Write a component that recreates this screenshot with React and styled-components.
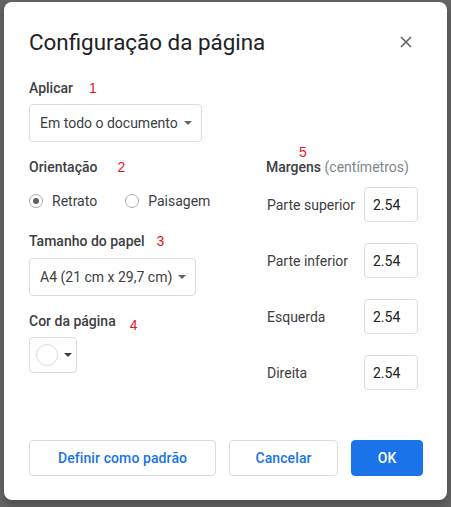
import styled, { createGlobalStyle } from "styled-components";

const GlobalStyle = createGlobalStyle`
  html, body {
    margin: 0;
    padding: 0;
    background: #646464;
  }
  body {
    font-family: Roboto, "Noto Sans", Arial, sans-serif;
    -webkit-font-smoothing: antialiased;
  }
  * {
    box-sizing: border-box;
  }
`;

const Backdrop = styled.div`
  width: 451px;
  height: 507px;
  padding: 2px 4px 6px 4px;
  display: flex;
  align-items: flex-start;
`;

const Dialog = styled.section`
  width: 443px;
  background: #fff;
  border-radius: 8px;
  padding: 24px 24px 24px 25px;
  display: flex;
  flex-direction: column;
  box-shadow: 0 4px 8px rgba(0, 0, 0, 0.25);
`;

const Header = styled.header`
  display: flex;
  align-items: center;
  justify-content: space-between;
  height: 32px;
`;

const Title = styled.h1`
  margin: 0;
  font-size: 22.4px;
  line-height: 32px;
  font-weight: 400;
  color: #202124;
`;

const CloseButton = styled.button`
  border: none;
  background: none;
  padding: 0;
  width: 24px;
  height: 24px;
  margin-right: 5px;
  display: flex;
  align-items: center;
  justify-content: center;
  cursor: pointer;
`;

const Label = styled.div`
  position: relative;
  font-size: 14px;
  line-height: 20px;
  font-weight: 500;
  color: #3c4043;
  margin-top: ${(p) => p.$top}px;
  margin-bottom: ${(p) => p.$bottom ?? 6}px;
`;

const Hint = styled.span`
  font-weight: 400;
  color: #80868b;
`;

const Marker = styled.span`
  font-family: "Liberation Sans", Arial, sans-serif;
  font-weight: 400;
  font-size: 14px;
  color: #e8141c;
  margin-left: ${(p) => p.$gap}px;
  position: relative;
  top: ${(p) => p.$drop || 0}px;
`;

const FloatingMarker = styled(Marker)`
  position: absolute;
  left: 33px;
  top: -15px;
  margin: 0;
`;

const Select = styled.button`
  height: 38px;
  padding: 0 9px 0 10px;
  border: 1px solid #dadce0;
  border-radius: 4px;
  background: #fff;
  display: inline-flex;
  align-items: center;
  gap: 6px;
  font-family: inherit;
  font-size: 14px;
  color: #3c4043;
  align-self: flex-start;
  cursor: pointer;
`;

const Caret = styled.span`
  width: 0;
  height: 0;
  border-left: 4px solid transparent;
  border-right: 4px solid transparent;
  border-top: 4px solid ${(p) => p.$color || "#5f6368"};
`;

const Columns = styled.div`
  display: grid;
  grid-template-columns: 237px 1fr;
`;

const Column = styled.div`
  display: flex;
  flex-direction: column;
`;

const RadioGroup = styled.div`
  display: flex;
  align-items: center;
  height: 20px;
  margin-top: 14px;
`;

const RadioOption = styled.label`
  display: flex;
  align-items: center;
  gap: 9px;
  font-size: 14px;
  color: #3c4043;
  margin-right: 28px;
`;

const RadioCircle = styled.span`
  width: 14px;
  height: 14px;
  border-radius: 50%;
  border: 1px solid #a6aaaf;
  display: flex;
  align-items: center;
  justify-content: center;

  &::after {
    content: "";
    width: 6px;
    height: 6px;
    border-radius: 50%;
    background: ${(p) => (p.$checked ? "#5f6368" : "transparent")};
  }
`;

const ColorButton = styled.button`
  width: 48px;
  height: 36px;
  border: 1px solid #dadce0;
  border-radius: 4px;
  background: #fff;
  display: flex;
  align-items: center;
  padding: 0 0 0 6px;
  gap: 6px;
  cursor: pointer;
`;

const Swatch = styled.span`
  width: 22px;
  height: 22px;
  border-radius: 50%;
  border: 1px solid #dadce0;
  background: ${(p) => p.$color};
`;

const MarginRows = styled.div`
  display: flex;
  flex-direction: column;
  gap: 21px;
  margin-top: 10px;
`;

const MarginRow = styled.div`
  display: grid;
  grid-template-columns: 97px 54px;
  align-items: center;
  padding-left: 1px;
`;

const RowLabel = styled.span`
  font-size: 14px;
  color: #3c4043;
`;

const NumberInput = styled.input`
  width: 54px;
  height: 35px;
  border: 1px solid #dadce0;
  border-radius: 4px;
  padding: 0 0 0 8px;
  font-family: inherit;
  font-size: 14px;
  color: #202124;
  outline: none;
`;

const Footer = styled.footer`
  display: flex;
  justify-content: flex-end;
  gap: 13px;
  margin-top: 50px;
`;

const Button = styled.button`
  width: ${(p) => p.$width}px;
  height: 36px;
  padding: 0;
  border-radius: 4px;
  font-family: inherit;
  font-size: 14px;
  font-weight: 500;
  letter-spacing: 0.1px;
  cursor: pointer;
  border: 1px solid ${(p) => (p.$primary ? "#1a73e8" : "#dadce0")};
  background: ${(p) => (p.$primary ? "#1a73e8" : "#fff")};
  color: ${(p) => (p.$primary ? "#fff" : "#1a73e8")};
`;

const margins = [
  { label: "Parte superior", value: "2.54" },
  { label: "Parte inferior", value: "2.54" },
  { label: "Esquerda", value: "2.54" },
  { label: "Direita", value: "2.54" },
];

const App = () => {
  return (
    <>
      <GlobalStyle />
      <Backdrop>
        <Dialog>
          <Header>
            <Title>Configuração da página</Title>
            <CloseButton aria-label="Fechar">
              <svg width="12" height="12" viewBox="0 0 12 12">
                <path
                  d="M1 1 L11 11 M11 1 L1 11"
                  stroke="#5f6368"
                  strokeWidth="1.6"
                  fill="none"
                />
              </svg>
            </CloseButton>
          </Header>

          <Label $top={20}>
            Aplicar<Marker $gap={16}>1</Marker>
          </Label>
          <Select>
            Em todo o documento
            <Caret />
          </Select>

          <Columns>
            <Column>
              <Label $top={15} $bottom={0}>
                Orientação<Marker $gap={20}>2</Marker>
              </Label>
              <RadioGroup>
                <RadioOption>
                  <RadioCircle $checked />
                  Retrato
                </RadioOption>
                <RadioOption>
                  <RadioCircle />
                  Paisagem
                </RadioOption>
              </RadioGroup>

              <Label $top={20} $bottom={7}>
                Tamanho do papel<Marker $gap={12}>3</Marker>
              </Label>
              <Select>
                A4 (21 cm x 29,7 cm)
                <Caret />
              </Select>

              <Label $top={15}>
                Cor da página<Marker $gap={14} $drop={4}>4</Marker>
              </Label>
              <ColorButton>
                <Swatch $color="#ffffff" />
                <Caret $color="#3c4043" />
              </ColorButton>
            </Column>

            <Column>
              <Label $top={15} $bottom={0}>
                Margens <Hint>(centímetros)</Hint>
                <FloatingMarker>5</FloatingMarker>
              </Label>
              <MarginRows>
                {margins.map((m) => (
                  <MarginRow key={m.label}>
                    <RowLabel>{m.label}</RowLabel>
                    <NumberInput defaultValue={m.value} />
                  </MarginRow>
                ))}
              </MarginRows>
            </Column>
          </Columns>

          <Footer>
            <Button $width={187}>Definir como padrão</Button>
            <Button $width={109}>Cancelar</Button>
            <Button $width={72} $primary>
              OK
            </Button>
          </Footer>
        </Dialog>
      </Backdrop>
    </>
  );
};

export default App;
